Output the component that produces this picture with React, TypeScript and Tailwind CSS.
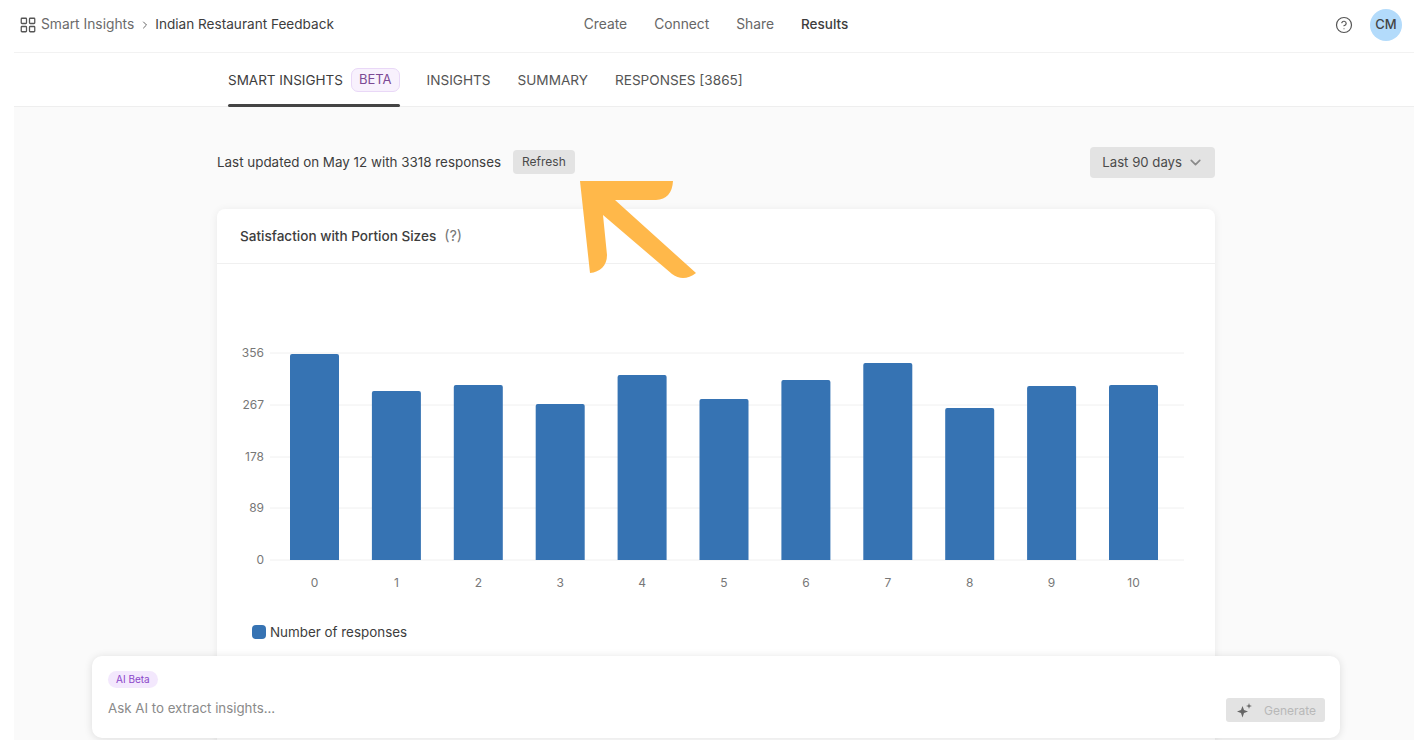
import { ChevronDown, ChevronRight, CircleHelp, LayoutGrid } from "lucide-react";

const bars = [354, 391, 385, 404, 375, 399, 380, 363, 408, 386, 385];
const ticks = [
  { label: "356", y: 353 },
  { label: "267", y: 405 },
  { label: "178", y: 457 },
  { label: "89", y: 508 },
  { label: "0", y: 560 },
];

const Chart = () => {
  return (
    <svg width="998" height="340" viewBox="217 264 998 340" className="block">
      {ticks.map((t) => (
        <g key={t.label}>
          <line x1="270" x2="1184" y1={t.y} y2={t.y} stroke="#f0f0f0" strokeWidth="1" />
          <text x="264" y={t.y + 4} textAnchor="end" fontSize="12" fill="#777777">
            {t.label}
          </text>
        </g>
      ))}
      {bars.map((top, i) => {
        const x = 290 + i * 81.9;
        return (
          <g key={i}>
            <path
              d={`M${x} 560 V${top + 2} Q${x} ${top} ${x + 2} ${top} H${x + 47} Q${x + 49} ${top} ${x + 49} ${top + 2} V560 Z`}
              fill="#3673b3"
            />
            <text x={x + 24.5} y="587" textAnchor="middle" fontSize="12" fill="#777777">
              {i}
            </text>
          </g>
        );
      })}
    </svg>
  );
};

export default function App() {
  return (
    <div className="relative h-[740px] w-[1414px] overflow-hidden bg-white pl-[14px] font-['Inter',sans-serif] text-[#3d3d3d]">
      <header className="grid h-[53px] grid-cols-[1fr_auto_1fr] items-center border-b border-[#f2f2f2] pr-[12px] pb-[3px] pl-[5px] text-[13.8px]">
        <div className="flex items-center">
          <LayoutGrid size={18} strokeWidth={1.7} className="text-[#555]" />
          <span className="ml-[4px] text-[#6b6b6b]">Smart Insights</span>
          <ChevronRight size={12} strokeWidth={2} className="mr-[4px] ml-[5px] text-[#666]" />
          <span className="text-[13.6px]">Indian Restaurant Feedback</span>
        </div>
        <nav className="ml-[11px] flex items-center gap-[27px] text-[#666]">
          <span>Create</span>
          <span>Connect</span>
          <span>Share</span>
          <span className="text-[13.5px] font-medium text-[#3d3d3d]">Results</span>
        </nav>
        <div className="flex items-center justify-end gap-[17px]">
          <CircleHelp size={18} strokeWidth={1.6} className="text-[#555]" />
          <div className="flex size-8 items-center justify-center rounded-full bg-[#b3dbfb] text-[13px] font-[450] text-[#444]">
            CM
          </div>
        </div>
      </header>

      <div className="flex h-[54px] items-center gap-[27px] border-b border-[#eeeeee] pt-[1px] pl-[214px] text-[13.6px] text-[#555]">
        <div className="relative flex h-full items-center gap-2 text-[#3d3d3d]">
          <span className="text-[13.5px]">SMART INSIGHTS</span>
          <span className="rounded-[7px] border border-[#e9d8f7] bg-[#f8f1fd] px-[7px] py-[1px] text-[13px] text-[#7c4a94]">
            BETA
          </span>
          <div className="absolute right-0 bottom-[-1px] left-0 h-[3px] rounded-sm bg-[#444]" />
        </div>
        <span>INSIGHTS</span>
        <span>SUMMARY</span>
        <span>RESPONSES [3865]</span>
      </div>

      <main className="h-[640px] bg-[#fafafa] pt-[40px] pr-[199px] pl-[203px]">
        <div className="flex items-center justify-between">
          <div className="flex items-center gap-3 text-[13.4px]">
            <span>Last updated on May 12 with 3318 responses</span>
            <button className="-mt-[2px] h-6 rounded-[4px] bg-[#e3e3e3] px-[9px] text-xs text-[#4a4a4a]">Refresh</button>
          </div>
          <button className="flex h-[31px] items-center gap-[5px] rounded-[4px] bg-[#e3e3e3] pr-[11px] pl-[12px] text-[13.2px] text-[#4a4a4a]">
            Last 90 days
            <ChevronDown size={17} strokeWidth={2.4} className="text-[#8a8a8a]" />
          </button>
        </div>

        <section className="mt-[31px] h-[560px] rounded-[8px] bg-white shadow-[0_1px_8px_rgba(0,0,0,0.07)]">
          <div className="flex h-[55px] items-center gap-2 border-b border-[#f0f0f0] px-[23px] text-[13.55px]">
            <span className="font-[450]">Satisfaction with Portion Sizes</span>
            <span className="text-[14.5px] text-[#777]">(?)</span>
          </div>
          <Chart />
          <div className="mt-[18px] ml-[35px] flex items-center gap-1 text-[13.4px]">
            <span className="size-[14px] rounded-[4px] bg-[#3673b3]" />
            Number of responses
          </div>
        </section>
      </main>

      <svg className="absolute top-0 left-0" width="1414" height="300" viewBox="0 0 1414 300">
        <path
          d="M580 181 H673 Q672 199 656 200 H615 L696 273 C688 279 680 280 672 274 L603 215 L607 255 C607 266 600 272 590 273 Z"
          fill="#ffb84a"
        />
      </svg>

      <div className="absolute top-[656px] left-[92px] h-[82px] w-[1248px] rounded-[10px] bg-white shadow-[0_1px_8px_rgba(0,0,0,0.12)]">
        <span className="absolute top-[15px] left-[16px] rounded-full bg-[#f3e8fd] px-[8px] py-[1px] text-[10px] text-[#8b46c9]">
          AI Beta
        </span>
        <span className="absolute top-[43px] left-[16px] text-[13.3px] text-[#8a8a8a]">Ask AI to extract insights...</span>
        <button className="absolute top-[42px] right-[15px] flex h-6 w-[99px] items-center rounded-[3px] bg-[#e3e3e3] pl-[10px] text-xs text-[#b8b8b8]">
          <svg width="17" height="17" viewBox="0 0 17 17" fill="#666">
            <path d="M6.5 4 L8 8 L12 9.5 L8 11 L6.5 15.5 L5 11 L1 9.5 L5 8 Z" />
            <path d="M13 1 L13.7 3.3 L16 4 L13.7 4.7 L13 7 L12.3 4.7 L10 4 L12.3 3.3 Z" />
          </svg>
          <span className="mt-[1px] ml-[11px]">Generate</span>
        </button>
      </div>
    </div>
  );
}
